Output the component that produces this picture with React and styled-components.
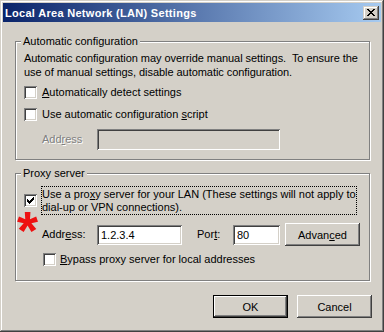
import React from 'react';
import styled, { createGlobalStyle } from 'styled-components';

const Global = createGlobalStyle`
  html, body { margin: 0; padding: 0; background: #D4D0C8; }
  body { font-family: "Liberation Sans", Arial, sans-serif; font-size: 11px; }
  * { box-sizing: border-box; }
`;

const FACE = '#D4D0C8';
const raised = `box-shadow: inset -1px -1px 0 #404040, inset 1px 1px 0 #fff, inset -2px -2px 0 #808080, inset 2px 2px 0 ${FACE};`;
const sunken = `box-shadow: inset 1px 1px 0 #808080, inset -1px -1px 0 #fff, inset 2px 2px 0 #404040, inset -2px -2px 0 ${FACE};`;

const Win = styled.div`
  width: 384px;
  height: 332px;
  background: ${FACE};
  padding: 3px;
  display: flex;
  flex-direction: column;
  box-shadow: inset -1px -1px 0 #404040, inset 1px 1px 0 ${FACE}, inset -2px -2px 0 #808080, inset 2px 2px 0 #fff;
  color: #000;
  font-family: "Liberation Sans", Arial, sans-serif;
  font-size: 11px;
`;

const TitleBar = styled.div`
  height: 19px;
  display: flex;
  align-items: center;
  padding: 0 2px;
  background: linear-gradient(to right, #0A246A, #A6CAF0);
`;

const Title = styled.div`
  flex: 1;
  color: #fff;
  font-weight: bold;
  font-size: 11px;
  letter-spacing: 0.3px;
  white-space: nowrap;
`;

const CloseBtn = styled.div`
  width: 16px;
  height: 14px;
  background: ${FACE};
  box-shadow: inset -1px -1px 0 #404040, inset 1px 1px 0 ${FACE}, inset -2px -2px 0 #808080, inset 2px 2px 0 #fff;
  display: flex;
  align-items: center;
  justify-content: center;
  padding-bottom: 1px;
`;

const Body = styled.div`
  display: flex;
  flex-direction: column;
  padding: 13px 10px 0 12px;
`;

const Group = styled.fieldset`
  margin: ${p => p.$mt || 0}px 0 0 0;
  width: 355px;
  border: 1px solid #808080;
  box-shadow: inset 1px 1px 0 #fff, 1px 1px 0 #fff;
  padding: 0 8px ${p => p.$pb}px 8px;
  min-width: 0;
`;

const Legend = styled.legend`
  padding: 0 2px;
  margin-left: -3px;
  line-height: 13px;
  background: ${FACE};
`;

const Column = styled.div`
  display: flex;
  flex-direction: column;
`;

const Para = styled.p`
  margin: 3px 0 0 0;
  line-height: 14px;
  white-space: nowrap;
  letter-spacing: -0.05px;
`;

const Row = styled.div`
  display: flex;
  align-items: center;
  position: relative;
  margin-top: ${p => p.$mt || 0}px;
  padding-left: ${p => p.$pl || 0}px;
  gap: ${p => p.$gap || 0}px;
`;

const Box = styled.span`
  width: 13px;
  height: 13px;
  flex: none;
  background: #fff;
  ${sunken}
  display: flex;
  align-items: center;
  justify-content: center;
`;

const Label = styled.span`
  line-height: 13px;
  white-space: nowrap;
  color: ${p => (p.$disabled ? '#808080' : '#000')};
  text-shadow: ${p => (p.$disabled ? '1px 1px 0 #fff' : 'none')};
  width: ${p => (p.$w ? `${p.$w}px` : 'auto')};
  margin-left: ${p => p.$ml || 0}px;
  flex: none;
`;

const FocusLabel = styled.span`
  width: 316px;
  border: 1px dotted #000;
  padding: 1px 0 0 0;
  line-height: 13px;
  white-space: nowrap;
`;

const Edit = styled.input`
  width: ${p => p.$w}px;
  height: ${p => p.$h || 20}px;
  border: none;
  outline: none;
  margin: 0;
  padding: 0 2px 0 4px;
  font-family: "Liberation Sans", Arial, sans-serif;
  font-size: 11px;
  color: #000;
  background: ${p => (p.disabled ? FACE : '#fff')};
  ${sunken}
  flex: none;
`;

const Button = styled.button`
  width: 75px;
  height: 23px;
  margin: 0 0 0 ${p => p.$ml || 0}px;
  padding: 0;
  border: ${p => (p.$default ? '1px solid #000' : 'none')};
  background: ${FACE};
  ${raised}
  font-family: "Liberation Sans", Arial, sans-serif;
  font-size: 11px;
  color: #000;
  flex: none;
`;

const ButtonRow = styled.div`
  display: flex;
  justify-content: flex-end;
  gap: 9px;
  margin-top: 14px;
  margin-right: -1px;
`;

const Asterisk = styled.span`
  position: absolute;
  left: -7px;
  top: -20px;
  color: #ee1111;
  font-family: "Liberation Sans", Arial, sans-serif;
  font-weight: bold;
  font-size: 54px;
  line-height: 54px;
  pointer-events: none;
`;

const Pixels = ({ rows, color = '#000' }) => {
  const w = rows[0].length;
  const h = rows.length;
  const rects = [];
  rows.forEach((r, y) =>
    r.split('').forEach((c, x) => {
      if (c === 'X') rects.push(<rect key={`${x}-${y}`} x={x} y={y} width="1" height="1" fill={color} />);
    })
  );
  return (
    <svg width={w} height={h} viewBox={`0 0 ${w} ${h}`} shapeRendering="crispEdges" style={{ display: 'block' }}>
      {rects}
    </svg>
  );
};

const CLOSE = ['XX....XX', '.XX..XX.', '..XXXX..', '...XX...', '..XXXX..', '.XX..XX.', 'XX....XX'];
const CHECK = ['......X', '.....XX', 'X...XXX', 'XX.XXX.', 'XXXXX..', '.XXX...', '..X....'];

const CheckBox = ({ checked }) => <Box>{checked && <Pixels rows={CHECK} />}</Box>;

export default function App() {
  return (
    <>
      <Global />
      <Win>
        <TitleBar>
          <Title>Local Area Network (LAN) Settings</Title>
          <CloseBtn>
            <Pixels rows={CLOSE} />
          </CloseBtn>
        </TitleBar>
        <Body>
          <Group $pb={9}>
            <Legend>Automatic configuration</Legend>
            <Column>
              <Para>
                Automatic configuration may override manual settings.&nbsp; To ensure the
                <br />
                use of manual settings, disable automatic configuration.
              </Para>
              <Row $mt={7} $gap={5}>
                <CheckBox />
                <Label>
                  <u>A</u>utomatically detect settings
                </Label>
              </Row>
              <Row $mt={9} $gap={5}>
                <CheckBox />
                <Label>
                  Use automatic configuration <u>s</u>cript
                </Label>
              </Row>
              <Row $mt={8} $pl={18}>
                <Label $disabled $w={55}>
                  Add<u>r</u>ess
                </Label>
                <Edit disabled $w={183} $h={21} defaultValue="" />
              </Row>
            </Column>
          </Group>
          <Group $mt={7} $pb={14}>
            <Legend>Proxy server</Legend>
            <Column>
              <Row $mt={6} $gap={4}>
                <CheckBox checked />
                <FocusLabel>
                  Use a pro<u>x</u>y server for your LAN (These settings will not apply to
                  <br />
                  dial-up or VPN connections).
                </FocusLabel>
              </Row>
              <Row $mt={8} $pl={18}>
                <Asterisk>*</Asterisk>
                <Label $w={55}>
                  Addr<u>e</u>ss:
                </Label>
                <Edit $w={85} readOnly defaultValue="1.2.3.4" />
                <Label $w={36} $ml={15}>
                  Por<u>t</u>:
                </Label>
                <Edit $w={47} readOnly defaultValue="80" />
                <Button $ml={5}>
                  Advan<u>c</u>ed
                </Button>
              </Row>
              <Row $mt={7} $pl={19} $gap={4}>
                <CheckBox />
                <Label>
                  <u>B</u>ypass proxy server for local addresses
                </Label>
              </Row>
            </Column>
          </Group>
          <ButtonRow>
            <Button $default>OK</Button>
            <Button>Cancel</Button>
          </ButtonRow>
        </Body>
      </Win>
    </>
  );
}
